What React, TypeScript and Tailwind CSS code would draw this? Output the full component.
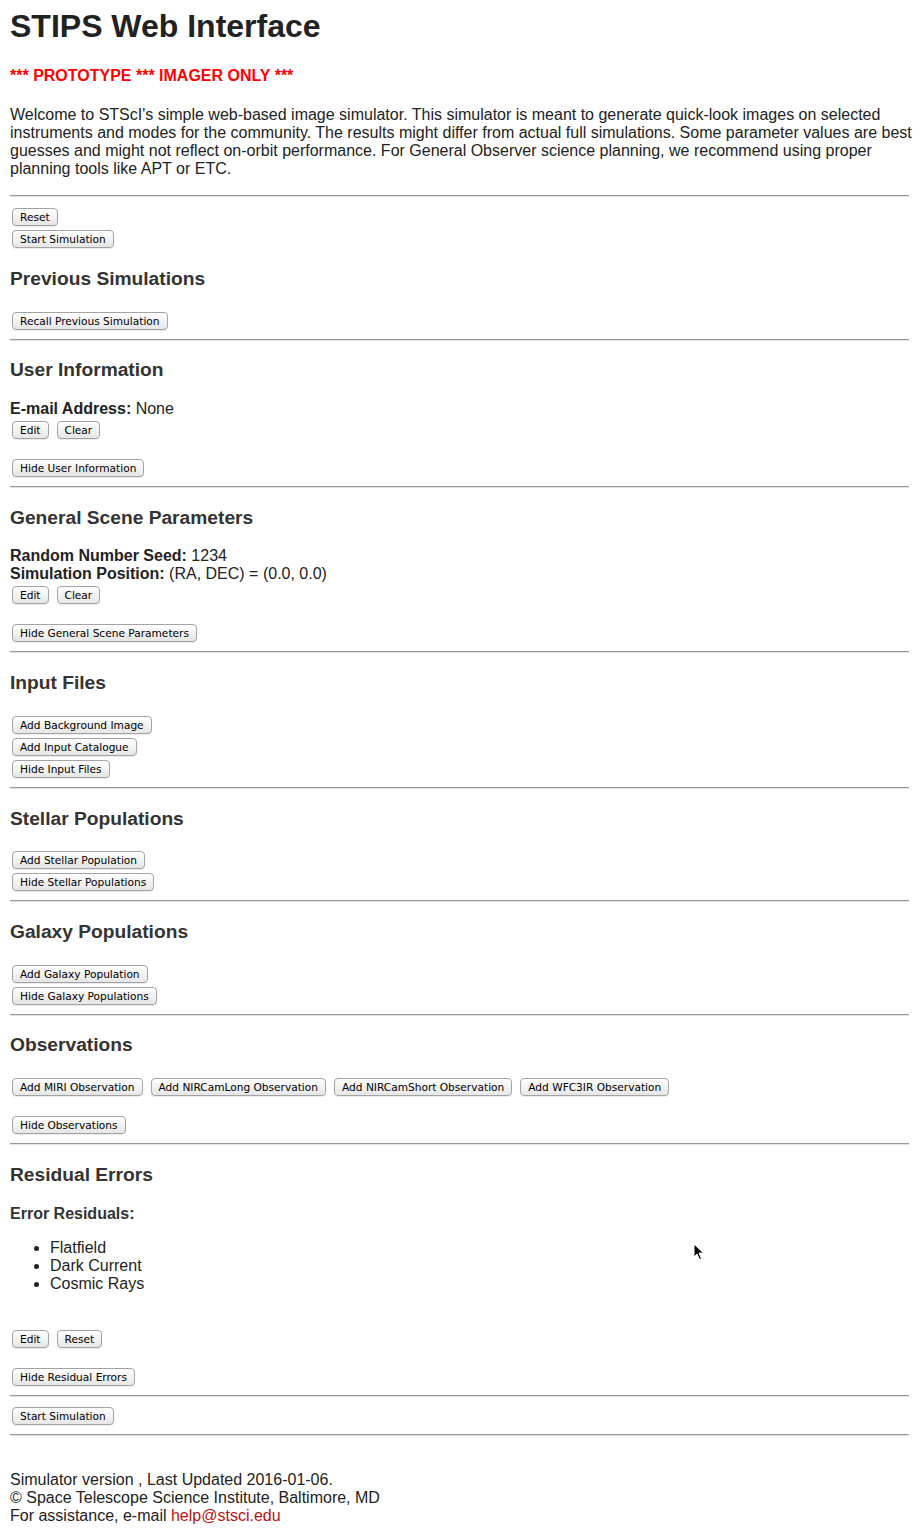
import React from "react";

const Btn = ({ children, className = "" }: { children: React.ReactNode; className?: string }) => (
  <button
    className={
      "h-[18px] px-[7px] border border-[#a3a3a3] rounded-[4px] bg-gradient-to-b from-white to-[#e6e6e6] text-[10.6px] leading-[16px] text-black shadow-[0_1px_0_rgba(0,0,0,0.08)] whitespace-nowrap " +
      className
    }
    style={{ fontFamily: '"DejaVu Sans", sans-serif' }}
  >
    {children}
  </button>
);

const Hr = ({ className = "" }: { className?: string }) => (
  <div className={"h-[2px] border-t border-[#9a9a9a] border-b border-b-[#e2e2e2] " + className} />
);

const H2 = ({ children, className = "" }: { children: React.ReactNode; className?: string }) => (
  <h2 className={"text-[19.2px] leading-[22px] font-bold text-[#333] " + className}>{children}</h2>
);

const Row = ({ children, className = "" }: { children: React.ReactNode; className?: string }) => (
  <div className={"flex pl-[2px] " + className}>{children}</div>
);

const Col = ({ children, className = "" }: { children: React.ReactNode; className?: string }) => (
  <div className={"flex flex-col items-start gap-[4px] pl-[2px] " + className}>{children}</div>
);

export default function App() {
  return (
    <div
      className="relative min-h-[1536px] bg-white pl-[10px] pr-[11px] text-[16px] leading-[18px] text-[#222]"
      style={{ fontFamily: '"Liberation Sans", Arial, sans-serif' }}
    >
      <div className="flex flex-col">
        <h1 className="mt-[8px] text-[32px] leading-[36px] font-bold text-[#222]">STIPS Web Interface</h1>
        <div className="mt-[23px] font-bold text-[#ff0000]">*** PROTOTYPE *** IMAGER ONLY ***</div>
        <p className="mt-[21px] mr-[-9px]">
          Welcome to STScI's simple web-based image simulator. This simulator is meant to generate quick-look images on
          selected instruments and modes for the community. The results might differ from actual full simulations. Some
          parameter values are best guesses and might not reflect on-orbit performance. For General Observer science
          planning, we recommend using proper planning tools like APT or ETC.
        </p>
        <Hr className="mt-[17px]" />

        <Col className="mt-[11px]">
          <Btn>Reset</Btn>
          <Btn>Start Simulation</Btn>
        </Col>

        <H2 className="mt-[20px]">Previous Simulations</H2>
        <Row className="mt-[22px]">
          <Btn>Recall Previous Simulation</Btn>
        </Row>
        <Hr className="mt-[9px]" />

        <H2 className="mt-[18px]">User Information</H2>
        <div className="mt-[19px]">
          <b>E-mail Address:</b> None
        </div>
        <Row className="mt-[3px] gap-[8px]">
          <Btn>Edit</Btn>
          <Btn>Clear</Btn>
        </Row>
        <Row className="mt-[20px]">
          <Btn>Hide User Information</Btn>
        </Row>
        <Hr className="mt-[9px]" />

        <H2 className="mt-[19px]">General Scene Parameters</H2>
        <div className="mt-[18px]">
          <b>Random Number Seed:</b> 1234
        </div>
        <div>
          <b>Simulation Position:</b> (RA, DEC) = (0.0, 0.0)
        </div>
        <Row className="mt-[3px] gap-[8px]">
          <Btn>Edit</Btn>
          <Btn>Clear</Btn>
        </Row>
        <Row className="mt-[20px]">
          <Btn>Hide General Scene Parameters</Btn>
        </Row>
        <Hr className="mt-[9px]" />

        <H2 className="mt-[19px]">Input Files</H2>
        <Col className="mt-[22px]">
          <Btn>Add Background Image</Btn>
          <Btn>Add Input Catalogue</Btn>
          <Btn>Hide Input Files</Btn>
        </Col>
        <Hr className="mt-[9px]" />

        <H2 className="mt-[19px]">Stellar Populations</H2>
        <Col className="mt-[21px]">
          <Btn>Add Stellar Population</Btn>
          <Btn>Hide Stellar Populations</Btn>
        </Col>
        <Hr className="mt-[9px]" />

        <H2 className="mt-[19px]">Galaxy Populations</H2>
        <Col className="mt-[22px]">
          <Btn>Add Galaxy Population</Btn>
          <Btn>Hide Galaxy Populations</Btn>
        </Col>
        <Hr className="mt-[9px]" />

        <H2 className="mt-[18px]">Observations</H2>
        <Row className="mt-[22px] gap-[8px]">
          <Btn>Add MIRI Observation</Btn>
          <Btn>Add NIRCamLong Observation</Btn>
          <Btn>Add NIRCamShort Observation</Btn>
          <Btn>Add WFC3IR Observation</Btn>
        </Row>
        <Row className="mt-[20px]">
          <Btn>Hide Observations</Btn>
        </Row>
        <Hr className="mt-[9px]" />

        <H2 className="mt-[19px]">Residual Errors</H2>
        <div className="mt-[19px] font-bold text-[#333]">Error Residuals:</div>
        <ul className="mt-[16px] list-disc pl-[40px]">
          <li>Flatfield</li>
          <li>Dark Current</li>
          <li>Cosmic Rays</li>
        </ul>
        <Row className="mt-[37px] gap-[8px]">
          <Btn>Edit</Btn>
          <Btn>Reset</Btn>
        </Row>
        <Row className="mt-[20px]">
          <Btn>Hide Residual Errors</Btn>
        </Row>
        <Hr className="mt-[9px]" />
        <Row className="mt-[10px]">
          <Btn>Start Simulation</Btn>
        </Row>
        <Hr className="mt-[9px]" />

        <div className="mt-[35px]">
          <div>Simulator version , Last Updated 2016-01-06.</div>
          <div>© Space Telescope Science Institute, Baltimore, MD</div>
          <div>
            For assistance, e-mail <a className="text-[#bb1111]">help@stsci.edu</a>
          </div>
        </div>
      </div>

      <svg className="absolute left-[693px] top-[1243px]" width="12" height="18" viewBox="0 0 12 18">
        <path d="M1 1 L1 14 L4 11 L6.5 16.5 L8.5 15.5 L6 10 L10.5 10 Z" fill="#000" stroke="#fff" strokeWidth="1" />
      </svg>
    </div>
  );
}
